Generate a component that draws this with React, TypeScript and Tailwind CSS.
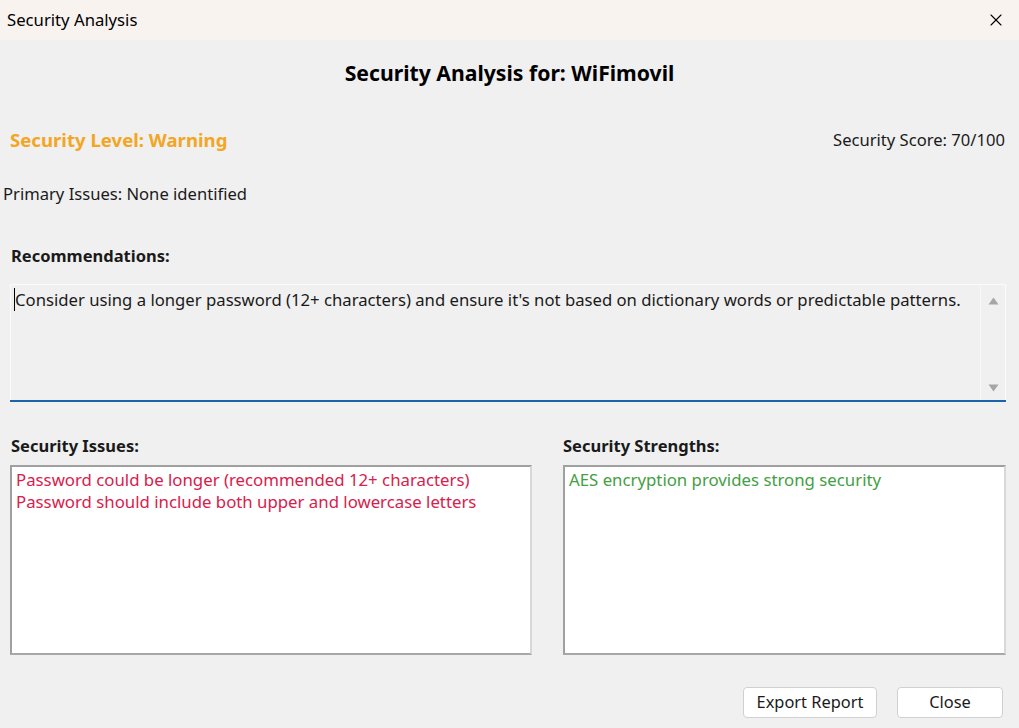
import { X } from "lucide-react";

const font = { fontFamily: '"Noto Sans", "Open Sans", sans-serif' };

function Arrow({ up }: { up?: boolean }) {
  return (
    <svg width="11" height="8" viewBox="0 0 11 8">
      <path d={up ? "M0.5 7.5 L5.5 0.5 L10.5 7.5 Z" : "M0.5 0.5 L5.5 7.5 L10.5 0.5 Z"} fill="#a6a6a6" />
    </svg>
  );
}

export default function App() {
  return (
    <div className="w-[1019px] h-[728px] flex flex-col bg-[#f0f0f0] text-[#1a1a1a] overflow-hidden" style={font}>
      {/* title bar */}
      <div className="h-[40px] flex items-center justify-between bg-[#f9f3f0] pl-[7px] pr-[13px] shrink-0">
        <span className="text-[16.7px] text-black">Security Analysis</span>
        <X className="w-[20px] h-[20px] text-black" strokeWidth={1.3} />
      </div>

      <div className="flex-1 flex flex-col px-[10px]">
        <h1 className="text-center font-bold text-[21.2px] text-black mt-[18px] leading-[30px]">
          Security Analysis for: WiFimovil
        </h1>

        <div className="flex items-center justify-between mt-[39px] pr-[4px] leading-[26px]">
          <span className="font-bold text-[18.6px] text-[#f4a523]">Security Level: Warning</span>
          <span className="text-[16.6px]">Security Score: 70/100</span>
        </div>

        <p className="text-[16.6px] leading-[24px] mt-[29px] -ml-[7px]">Primary Issues: None identified</p>

        <p className="font-bold text-[16.5px] leading-[22px] mt-[39px] ml-[1px]">Recommendations:</p>

        <div className="mr-[3px] flex flex-col">
          <div className="mt-[17px] h-[116px] flex border border-[#fbfbfb] border-b-0 bg-[#f0f0f0]">
            <div className="flex-1 pl-[3px] pt-[3px] text-[16.7px] leading-[24px]">
              <span className="border-l border-black">Consider using a longer password (12+ characters) and ensure it's not based on dictionary words or predictable patterns.</span>
            </div>
            <div className="w-[25px] flex flex-col items-center justify-between pt-[12px] pb-[8px] border-l border-[#f8f8f8]">
              <Arrow up />
              <Arrow />
            </div>
          </div>
          <div className="h-[2px] bg-[#1a63ad]" />
        </div>

        <div className="flex gap-[31px] mt-[33px] pr-[3px]">
          <div className="w-[522px] flex flex-col">
            <p className="font-bold text-[16.5px] leading-[22px] ml-[1px]">Security Issues:</p>
            <div className="mt-[8px] h-[190px] bg-white border-2 border-[#a0a0a0] border-r-[#d8d8d8] border-b-[#a8a8a8] px-[4px] pt-[2px] text-[16.8px] leading-[22px] text-[#d8204c]">
              <p>Password could be longer (recommended 12+ characters)</p>
              <p>Password should include both upper and lowercase letters</p>
            </div>
          </div>
          <div className="flex-1 flex flex-col">
            <p className="font-bold text-[16.5px] leading-[22px]">Security Strengths:</p>
            <div className="mt-[8px] h-[190px] bg-white border-2 border-[#a0a0a0] border-r-[#d8d8d8] border-b-[#a8a8a8] px-[4px] pt-[2px] text-[16.8px] leading-[22px] text-[#43a043]">
              <p>AES encryption provides strong security</p>
            </div>
          </div>
        </div>

        <div className="flex justify-end gap-[20px] mt-[32px] pr-[6px]">
          <button className="w-[134px] h-[31px] bg-white border border-[#d0d0d0] rounded-[4px] text-[16.4px] text-[#1a1a1a]">
            Export Report
          </button>
          <button className="w-[106px] h-[31px] bg-white border border-[#d0d0d0] rounded-[4px] text-[16.4px] text-[#1a1a1a]">
            Close
          </button>
        </div>
      </div>
    </div>
  );
}
